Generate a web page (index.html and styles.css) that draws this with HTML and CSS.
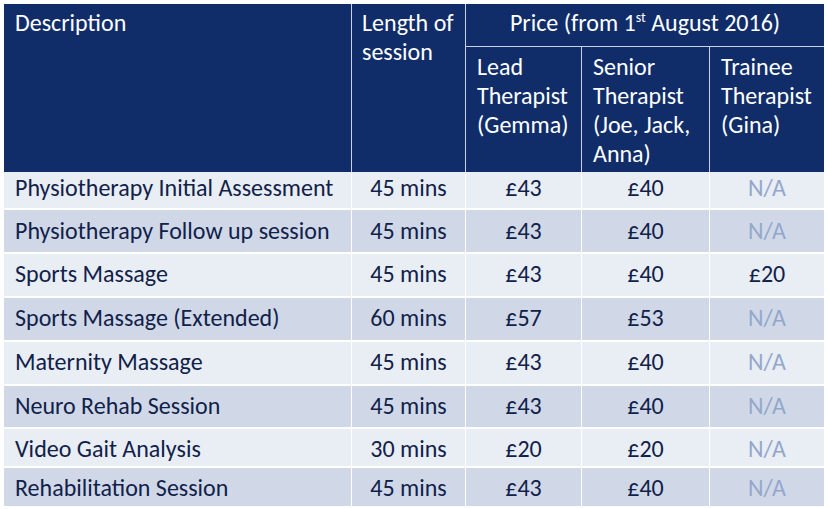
FILE: index.html
```html
<!DOCTYPE html>
<html lang="en">
<head>
<meta charset="utf-8">
<title>Price list</title>
<link rel="stylesheet" href="styles.css">
</head>
<body>
<table class="price-table">
  <colgroup>
    <col class="c-desc">
    <col class="c-len">
    <col class="c-lead">
    <col class="c-senior">
    <col class="c-trainee">
  </colgroup>
  <thead>
    <tr class="head-top">
      <th rowspan="2" class="h-desc">Description</th>
      <th rowspan="2" class="h-len">Length of<br>session</th>
      <th colspan="3" class="h-price">Price (from 1<sup>st</sup> August 2016)</th>
    </tr>
    <tr class="head-sub">
      <th>Lead<br>Therapist<br>(Gemma)</th>
      <th>Senior<br>Therapist<br>(Joe, Jack,<br>Anna)</th>
      <th class="last">Trainee<br>Therapist<br>(Gina)</th>
    </tr>
  </thead>
  <tbody>
    <tr class="r1 light"><td class="desc">Physiotherapy Initial Assessment</td><td>45 mins</td><td>£43</td><td>£40</td><td class="last na">N/A</td></tr>
    <tr class="r2 dark"><td class="desc">Physiotherapy Follow up session</td><td>45 mins</td><td>£43</td><td>£40</td><td class="last na">N/A</td></tr>
    <tr class="r3 light"><td class="desc">Sports Massage</td><td>45 mins</td><td>£43</td><td>£40</td><td class="last">£20</td></tr>
    <tr class="r4 dark"><td class="desc">Sports Massage (Extended)</td><td>60 mins</td><td>£57</td><td>£53</td><td class="last na">N/A</td></tr>
    <tr class="r5 light"><td class="desc">Maternity Massage</td><td>45 mins</td><td>£43</td><td>£40</td><td class="last na">N/A</td></tr>
    <tr class="r6 dark"><td class="desc">Neuro Rehab Session</td><td>45 mins</td><td>£43</td><td>£40</td><td class="last na">N/A</td></tr>
    <tr class="r7 light"><td class="desc">Video Gait Analysis</td><td>30 mins</td><td>£20</td><td>£20</td><td class="last na">N/A</td></tr>
    <tr class="r8 dark final"><td class="desc">Rehabilitation Session</td><td>45 mins</td><td>£43</td><td>£40</td><td class="last na">N/A</td></tr>
  </tbody>
</table>
</body>
</html>
```
FILE: styles.css
```css
html, body {
  margin: 0;
  padding: 0;
  background: #ffffff;
}
body {
  padding: 4px;
}
.price-table {
  table-layout: fixed;
  width: 820px;
  border-collapse: separate;
  border-spacing: 0;
  font-family: Carlito, "Lato", "Liberation Sans", sans-serif;
  font-size: 24px;
  line-height: 29px;
  color: #10214a;
}
.c-desc { width: 348px; }
.c-len { width: 114px; }
.c-lead { width: 116px; }
.c-senior { width: 128px; }
.c-trainee { width: 114px; }

.price-table th,
.price-table td {
  padding: 0;
  vertical-align: top;
  font-weight: normal;
  border-right: 1px solid #ffffff;
  border-bottom: 2px solid #ffffff;
  white-space: nowrap;
  overflow: visible;
}
.price-table .last { border-right: none; }
.price-table .final td { border-bottom: none; }

.price-table thead th {
  background: #102d69;
  color: #ffffff;
  text-align: left;
  border-right-color: #c9d1e2;
  border-bottom-color: #c9d1e2;
}
.head-top { height: 43px; }
.head-sub { height: 125px; }
.price-table th.h-desc {
  padding: 4px 0 0 11px;
  border-bottom: none;
}
.price-table th.h-len {
  padding: 4px 0 0 10px;
  border-bottom: none;
}
.price-table th.h-price {
  text-align: center;
  padding: 4px 0 0 0;
  border-right: none;
  border-bottom-width: 1px;
}
.h-price sup {
  font-size: 14px;
  line-height: 0;
  vertical-align: 9px;
}
.price-table .head-sub th {
  padding: 5px 0 0 11px;
  border-bottom: none;
}

.price-table tbody td {
  text-align: center;
  line-height: 22px;
}
.price-table tbody td.desc {
  text-align: left;
  padding-left: 11px;
}
.light td { background: #e9edf4; }
.dark td { background: #d0d8e8; }
.na { color: #93a7cc; }

.r1 { height: 38px; }
.r2, .r3, .r4, .r5 { height: 44px; }
.r6 { height: 43px; }
.r7 { height: 39px; }
.r8 { height: 38px; }

.price-table .r1 td { padding-top: 5px; }
.price-table .r2 td { padding-top: 10px; }
.price-table .r3 td { padding-top: 9px; }
.price-table .r4 td { padding-top: 9px; }
.price-table .r5 td { padding-top: 9px; }
.price-table .r6 td { padding-top: 9px; }
.price-table .r7 td { padding-top: 9px; }
.price-table .r8 td { padding-top: 9px; }
```
